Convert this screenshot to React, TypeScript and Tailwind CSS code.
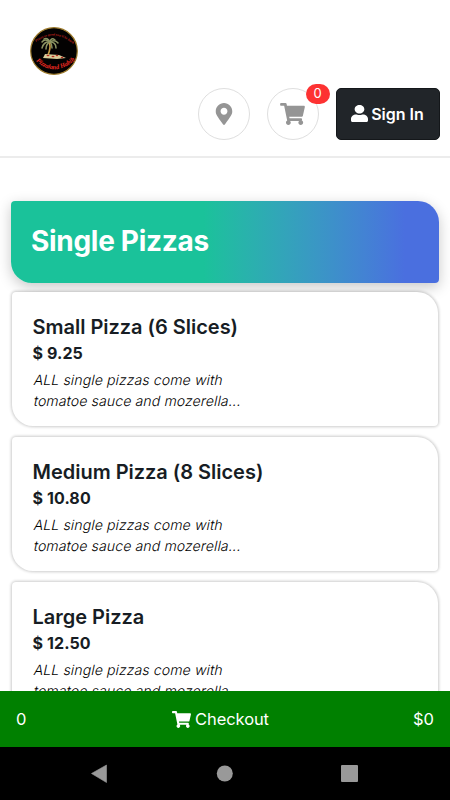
import React from "react";
import { FaMapMarkerAlt, FaShoppingCart, FaUser } from "react-icons/fa";

type MenuItem = {
    name: string;
    price: string;
    lines: string[];
};

const menuItems: MenuItem[] = [
    {
        name: "Small Pizza (6 Slices)",
        price: "$ 9.25",
        lines: ["ALL single pizzas come with", "tomatoe sauce and mozerella..."],
    },
    {
        name: "Medium Pizza (8 Slices)",
        price: "$ 10.80",
        lines: ["ALL single pizzas come with", "tomatoe sauce and mozerella..."],
    },
    {
        name: "Large Pizza",
        price: "$ 12.50",
        lines: ["ALL single pizzas come with", "tomatoe sauce and mozerella..."],
    },
];

const Logo: React.FC = (): React.ReactElement => (
    <svg className="h-12 w-12" viewBox="0 0 48 48">
        <defs>
            <path id="logoTop" d="M6 15 Q24 1 43 17" />
            <path id="logoBottom" d="M6 34 Q24 51 45 33" />
        </defs>
        <circle cx="24" cy="24" r="23.3" fill="#030202" stroke="#9c7a2c" strokeWidth="1.2" />
        <g stroke="#8b9463" strokeWidth="1.5" fill="none" strokeLinecap="round">
            <path d="M20 15 Q15 11 12 15" />
            <path d="M20 15 Q14 14 12 21" />
            <path d="M20 15 Q16 17 16 22" />
            <path d="M20 15 Q17 10 14 12" />
            <path d="M20 15 Q21 10 25 13" />
            <path d="M20 15 Q25 12 28 16" />
            <path d="M20 15 Q26 15 26 21" />
            <path d="M20 15 Q22 17 22 21" />
        </g>
        <path d="M19.5 16 Q21 21 18 28" stroke="#c39a45" strokeWidth="1.6" fill="none" />
        <path d="M15 27 L29 28 L36 31 L27 32 L13 31 Z" fill="#d9cc99" />
        <g fill="#b52a20">
            <ellipse cx="18" cy="28.5" rx="1.5" ry=".8" />
            <ellipse cx="23" cy="29.5" rx="1.5" ry=".8" />
            <ellipse cx="27" cy="28.5" rx="1.3" ry=".8" />
            <ellipse cx="32" cy="30.5" rx="1.3" ry=".8" />
        </g>
        <text fill="#c6231f" className="font-['Liberation_Serif'] text-[3.4px] font-bold italic">
            <textPath href="#logoTop">Pizzas so good you&apos;ll be back</textPath>
        </text>
        <text fill="#f02b22" className="font-['Liberation_Serif'] text-[6.4px] font-bold italic">
            <textPath href="#logoBottom">Pizzaland Habib</textPath>
        </text>
    </svg>
);

const Header: React.FC = (): React.ReactElement => (
    <header className="h-[158px] shrink-0 border-b-2 border-[#ececec]">
        <div className="h-[87.5px] pt-[27px] pl-[30px]">
            <Logo />
        </div>
        <div className="flex justify-end pr-[10.5px]">
            <button className="mr-[17px] flex h-[52px] w-[52px] items-center justify-center rounded-full border border-[#dfdfdf] text-[#959595]">
                <FaMapMarkerAlt size={22} />
            </button>
            <button className="relative mr-[17px] flex h-[52px] w-[52px] items-center justify-center rounded-full border border-[#dfdfdf] text-[#959595]">
                <FaShoppingCart size={22} className="h-[22px] w-[25px]" />
                <span className="absolute -top-[4.5px] -right-[12px] flex h-5 w-6 items-center justify-center rounded-[10px] bg-[#fd3232] text-[13px] text-white">
                    0
                </span>
            </button>
            <button className="flex h-[52px] w-[104px] items-center justify-center gap-[3px] rounded-[5px] border border-[#14171a] bg-[#212529] text-base font-semibold text-white">
                <FaUser className="h-[17px] w-[17px]" preserveAspectRatio="none" />
                <span>Sign In</span>
            </button>
        </div>
    </header>
);

const MenuCard: React.FC<{ item: MenuItem }> = (props): React.ReactElement => (
    <div className="h-[134px] shrink-0 rounded-tl-[4px] rounded-tr-[21px] rounded-br-[4px] rounded-bl-[21px] bg-white px-[20.5px] pt-[22px] text-[#171d24] shadow-[0_0_3px_1px_rgba(0,0,0,0.2)]">
        <h2 className="text-[20px] leading-[26px] font-semibold tracking-[-0.02px]">{props.item.name}</h2>
        <div className="text-[16px] leading-[26px] font-bold tracking-[0.1px]">{props.item.price}</div>
        <p className="mt-[3px] text-[14px] leading-[21px] font-light tracking-[0.15px] text-black">
            {props.item.lines.map((line) => (
                <span key={line} className="block origin-[0_75%] -skew-x-12 whitespace-nowrap">
                    {line}
                </span>
            ))}
        </p>
    </div>
);

export default function App() {
    return (
        <div className="flex h-[800px] w-[450px] flex-col overflow-hidden bg-white font-['Inter',sans-serif]">
            <Header />
            <main className="flex min-h-0 flex-1 flex-col overflow-hidden px-[11px] pt-[43px]">
                <div className="mb-[9px] flex h-[82px] shrink-0 items-center rounded-tl-[4px] rounded-tr-[21px] rounded-br-[4px] rounded-bl-[21px] bg-linear-to-r from-[#1ac29a] from-45% to-[#4a6fdf] to-92% px-[20px] pb-[2px] shadow-[0_4px_14px_rgba(0,0,0,0.22)]">
                    <h1 className="text-[28px] leading-none font-bold tracking-[-0.3px] text-white">Single Pizzas</h1>
                </div>
                <div className="flex flex-col gap-[11px] px-px">
                    {menuItems.map((item) => (
                        <MenuCard key={item.name} item={item} />
                    ))}
                </div>
            </main>
            <div className="grid h-[56px] shrink-0 grid-cols-[1fr_auto_1fr] items-center bg-[#008000] px-4 text-[16.5px] text-white">
                <span>0</span>
                <span className="flex items-center justify-center gap-1 pr-[9px] tracking-[-0.1px]">
                    <FaShoppingCart size={17} className="h-[17px] w-[19px]" />
                    Checkout
                </span>
                <span className="text-right">$0</span>
            </div>
            <nav className="h-[53px] shrink-0 bg-black">
                <svg className="h-[53px] w-[450px]" viewBox="0 0 450 53" fill="#999">
                    <path d="M91.5 26.5 L106.5 18 V35.5 Z" stroke="#999" strokeWidth=".6" strokeLinejoin="round" />
                    <circle cx="224.8" cy="26.5" r="8" />
                    <rect x="341" y="18" width="17" height="17" rx="1" />
                </svg>
            </nav>
        </div>
    );
}
